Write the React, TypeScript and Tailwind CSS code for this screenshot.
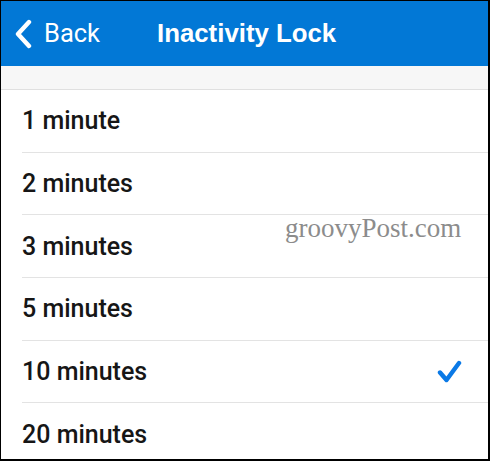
import React, { JSX } from 'react';

const options = ['1 minute', '2 minutes', '3 minutes', '5 minutes', '10 minutes', '20 minutes'];

const InactivityLock = (): JSX.Element => {
  const selected = '10 minutes';
  return (
    <div className="relative w-[490px] h-[461px] overflow-hidden bg-white border-t border-l border-r-2 border-b-2 border-black font-['Liberation_Sans',Arial,sans-serif]">
      <div className="h-[65px] bg-[#0278d6] flex items-center text-white">
        <div className="flex items-center pl-[13px] w-[150px]">
          <svg width="20" height="30" viewBox="0 0 20 30" fill="none">
            <path d="M15 3 L4 15 L15 27" stroke="white" strokeWidth="4.4" strokeLinecap="round" strokeLinejoin="round" />
          </svg>
          <span className="ml-[10px] text-[25.5px] leading-none font-['Roboto',sans-serif]">Back</span>
        </div>
        <span className="ml-[6px] text-[25.8px] font-bold leading-none">Inactivity Lock</span>
      </div>
      <div className="h-[24px] bg-[#f7f7f7] border-b border-[#e0e0e0]" />
      <div className="pl-[21px]">
        {options.map((o) => (
          <div key={o} className="h-[62.7px] flex items-center justify-between border-b border-[#e3e3e3] pr-[26px]">
            <span className="text-[25px] text-[#161616] leading-none font-['Roboto',sans-serif] font-medium">{o}</span>
            {o === selected && (
              <svg width="25" height="23" viewBox="0 0 25 23" fill="none">
                <path d="M3 12.5 L9.5 20 L22 3" stroke="#0a79e6" strokeWidth="4.4" strokeLinecap="round" strokeLinejoin="round" />
              </svg>
            )}
          </div>
        ))}
      </div>
      <span className="absolute left-[284px] top-[214px] text-[27px] text-[#8c8c8c] font-['Liberation_Serif',serif] leading-none">groovyPost.com</span>
    </div>
  );
};

export default function App(): JSX.Element {
  return <InactivityLock />;
}
